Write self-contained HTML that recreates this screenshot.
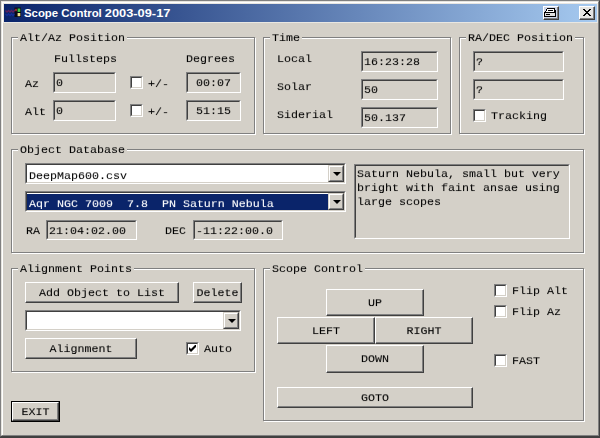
<!DOCTYPE html>
<html><head><meta charset="utf-8">
<style>
html,body{margin:0;padding:0;}
body{width:600px;height:438px;overflow:hidden;background:#404040;position:relative;font-family:"Liberation Mono",monospace;font-size:11.67px;line-height:14px;color:#000;}
*{box-sizing:border-box;}
.abs{position:absolute;}
#win{position:absolute;left:0;top:0;width:600px;height:437px;background:#d4d0c8;border-top:1px solid #808080;border-left:1px solid #808080;border-right:1px solid #404040;border-bottom:1px solid #404040;}
#win2{position:absolute;left:1px;top:1px;width:598px;height:435px;border-top:1px solid #e6e4de;border-left:1px solid #e6e4de;border-right:1px solid #808080;border-bottom:1px solid #808080;}
#win3{position:absolute;left:2px;top:2px;width:596px;height:433px;border-top:1px solid #fff;border-left:1px solid #fff;}
#title{outline:1px solid #e9e7e2;position:absolute;left:4px;top:4px;width:593px;height:18px;background:linear-gradient(to right,#0a246a 0%,#a6caf0 100%);}
.ttext{position:absolute;left:23px;top:6px;transform:scaleX(1.106);transform-origin:1px 0;font-family:"Liberation Sans",sans-serif;font-weight:bold;font-size:11px;line-height:14px;color:#fff;white-space:nowrap;}
.tbtn{position:absolute;top:6px;width:16px;height:14px;background:#d4d0c8;border-top:1px solid #fff;border-left:1px solid #fff;border-right:1px solid #404040;border-bottom:1px solid #404040;}
.tbtn:after{content:"";position:absolute;left:0;top:0;right:0;bottom:0;border-right:1px solid #808080;border-bottom:1px solid #808080;}
.grp{position:absolute;border:1px solid #808080;box-shadow:1px 1px 0 #fff, inset 1px 1px 0 #fff;}
.gl{position:absolute;background:#d4d0c8;white-space:pre;height:14px;line-height:14px;padding:0 2px;}
.t{position:absolute;white-space:pre;height:14px;line-height:14px;}
.in{position:absolute;background:#d4d0c8;border-top:1px solid #808080;border-left:1px solid #808080;border-right:1px solid #fff;border-bottom:1px solid #fff;}
.in:before{content:"";position:absolute;left:0;top:0;right:0;bottom:0;border-top:1px solid #404040;border-left:1px solid #404040;border-right:1px solid #d4d0c8;border-bottom:1px solid #d4d0c8;}
.in.w{background:#fff;}
.in span{position:absolute;white-space:pre;line-height:14px;height:14px;}
.t,.gl,.in span,.btn span{will-change:transform;transform:scaleY(0.96);transform-origin:0 11px;margin-top:1px;-webkit-text-stroke:0.08px;}
.cb{position:absolute;width:13px;height:13px;background:#fff;border-top:1px solid #808080;border-left:1px solid #808080;border-right:1px solid #fff;border-bottom:1px solid #fff;}
.cb:before{content:"";position:absolute;left:0;top:0;right:0;bottom:0;border-top:1px solid #404040;border-left:1px solid #404040;border-right:1px solid #d4d0c8;border-bottom:1px solid #d4d0c8;}
.btn{position:absolute;background:#d4d0c8;border-top:1px solid #fff;border-left:1px solid #fff;border-right:1px solid #404040;border-bottom:1px solid #404040;text-align:center;white-space:pre;}
.btn:before{content:"";position:absolute;left:0;top:0;right:0;bottom:0;border-right:1px solid #808080;border-bottom:1px solid #808080;}
.btn span{position:absolute;left:0;right:0;text-align:center;line-height:14px;height:14px;}
.dd{position:absolute;width:16px;background:#d4d0c8;border-top:1px solid #d4d0c8;border-left:1px solid #d4d0c8;border-right:1px solid #404040;border-bottom:1px solid #404040;}
.dd:before{content:"";position:absolute;left:0;top:0;right:0;bottom:0;border-top:1px solid #fff;border-left:1px solid #fff;border-right:1px solid #808080;border-bottom:1px solid #808080;}
.dd:after{content:"";position:absolute;left:4px;top:6px;border-left:4px solid transparent;border-right:4px solid transparent;border-top:4px solid #000;width:0;height:0;}
</style></head><body>
<div id="win"></div><div id="win2"></div><div id="win3"></div>
<div id="title"></div>
<svg class="abs" style="left:5px;top:7px" width="17" height="11" viewBox="0 0 17 11">
<rect x="9.5" y="0.5" width="6.5" height="9.5" fill="#0a0a14"/>
<rect x="12.6" y="1.5" width="2.7" height="3.4" fill="#38c848"/>
<rect x="12.6" y="6" width="2.7" height="3.2" fill="#f4e490"/>
<rect x="10" y="1.8" width="2" height="2.4" fill="#8c2830"/>
<path d="M0.5 3.5l1.5 1.5l1.5-1.5l1.5 1.5l1.5-1.5l1.5 1.5l2-2" stroke="#7c2058" stroke-width="1.3" stroke-opacity="0.75" fill="none"/>
<path d="M0.5 7l1.5 1.5l1.5-1.5l1.5 1.5l1.5-1.5l1.5 1.5l1.5-1.5" stroke="#1a34b8" stroke-width="1.3" stroke-opacity="0.6" fill="none"/>
</svg>
<div class="ttext" style="left:23.5px;transform:scaleX(1.035)">Scope Control</div><div class="ttext" style="left:104.5px;transform:scaleX(1.165)">2003-09-17</div>
<div class="tbtn" style="left:543px;background:#cdd6ea"></div>
<svg class="abs" style="left:544px;top:8px" width="12" height="9" viewBox="0 0 12 9" shape-rendering="crispEdges">
<path d="M3 0h8v1h-8zM2 1h1v2h-1zM10 1h1v3h-1zM4 2h5v1h-5zM1 3h1v1h-1zM11 2h1v2h-1zM0 4h12v1h-12zM0 5h1v3h-1zM11 5h1v3h-1zM0 8h12v1h-12zM2 6h4v1h-4z" fill="#000"/>
<path d="M3 1h7v1h-7zM3 2h1v1h-1zM9 2h1v1h-1zM2 3h8v1h-8z" fill="#fff"/>
<path d="M1 5h10v1h-10zM1 7h10v1h-10zM1 6h1v1h-1zM6 6h5v1h-5z" fill="#e0e0e0"/>
</svg>
<div class="tbtn" style="left:579px;background:#e4e4e2"></div>
<svg class="abs" style="left:583px;top:9px" width="8" height="7" viewBox="0 0 8 7" shape-rendering="crispEdges">
<path d="M0 0h2v1h-2zM6 0h2v1h-2zM1 1h2v1h-2zM5 1h2v1h-2zM2 2h4v1h-4zM3 3h2v1h-2zM2 4h4v1h-4zM1 5h2v1h-2zM5 5h2v1h-2zM0 6h2v1h-2zM6 6h2v1h-2z" fill="#000"/>
</svg>

<!-- Alt/Az Position -->
<div class="grp" style="left:11px;top:37px;width:244px;height:97px"></div>
<div class="gl" style="left:18px;top:30px">Alt/Az Position</div>
<div class="t" style="left:54px;top:51px">Fullsteps</div>
<div class="t" style="left:186px;top:51px">Degrees</div>
<div class="t" style="left:25px;top:76px">Az</div>
<div class="t" style="left:25px;top:104px">Alt</div>
<div class="in" style="left:53px;top:72px;width:63px;height:21px"><span style="left:2px;top:2px">0</span></div>
<div class="in" style="left:53px;top:100px;width:63px;height:21px"><span style="left:2px;top:2px">0</span></div>
<div class="cb" style="left:130px;top:76px"></div>
<div class="cb" style="left:130px;top:104px"></div>
<div class="t" style="left:148px;top:76px">+/-</div>
<div class="t" style="left:148px;top:104px">+/-</div>
<div class="in" style="left:186px;top:72px;width:55px;height:21px"><span style="left:0;right:0;top:2px;text-align:center">00:07</span></div>
<div class="in" style="left:186px;top:100px;width:55px;height:21px"><span style="left:0;right:0;top:2px;text-align:center">51:15</span></div>

<!-- Time -->
<div class="grp" style="left:263px;top:37px;width:188px;height:97px"></div>
<div class="gl" style="left:270px;top:30px">Time</div>
<div class="t" style="left:277px;top:51px">Local</div>
<div class="t" style="left:277px;top:79px">Solar</div>
<div class="t" style="left:277px;top:107px">Siderial</div>
<div class="in" style="left:361px;top:51px;width:77px;height:21px"><span style="left:2px;top:2px">16:23:28</span></div>
<div class="in" style="left:361px;top:79px;width:77px;height:21px"><span style="left:2px;top:2px">50</span></div>
<div class="in" style="left:361px;top:107px;width:77px;height:21px"><span style="left:2px;top:2px">50.137</span></div>

<!-- RA/DEC -->
<div class="grp" style="left:459px;top:37px;width:125px;height:97px"></div>
<div class="gl" style="left:466px;top:30px">RA/DEC Position</div>
<div class="in" style="left:473px;top:51px;width:91px;height:21px"><span style="left:2px;top:2px">?</span></div>
<div class="in" style="left:473px;top:79px;width:91px;height:21px"><span style="left:2px;top:2px">?</span></div>
<div class="cb" style="left:473px;top:109px"></div>
<div class="t" style="left:491px;top:108px">Tracking</div>

<!-- Object Database -->
<div class="grp" style="left:11px;top:149px;width:573px;height:104px"></div>
<div class="gl" style="left:18px;top:142px">Object Database</div>
<div class="in w" style="left:25px;top:163px;width:321px;height:21px"><span style="left:3px;top:4px">DeepMap600.csv</span></div>
<div class="dd" style="left:328px;top:165px;height:17px"></div>
<div class="in w" style="left:25px;top:191px;width:321px;height:21px"><div class="abs" style="left:1px;top:2px;width:301px;height:16px;background:#0a246a"></div><span style="left:3px;top:4px;color:#fff">Aqr NGC 7009  7.8  PN Saturn Nebula</span></div>
<div class="dd" style="left:328px;top:193px;height:17px"></div>
<div class="t" style="left:26px;top:223px">RA</div>
<div class="in" style="left:46px;top:220px;width:91px;height:20px"><span style="left:2px;top:2px">21:04:02.00</span></div>
<div class="t" style="left:165px;top:223px">DEC</div>
<div class="in" style="left:193px;top:220px;width:90px;height:20px"><span style="left:2px;top:2px">-11:22:00.0</span></div>
<div class="in" style="left:354px;top:164px;width:216px;height:75px"><span style="left:2px;top:1px">Saturn Nebula, small but very</span><span style="left:2px;top:15px">bright with faint ansae using</span><span style="left:2px;top:29px">large scopes</span></div>

<!-- Alignment Points -->
<div class="grp" style="left:11px;top:268px;width:244px;height:104px"></div>
<div class="gl" style="left:18px;top:261px">Alignment Points</div>
<div class="btn" style="left:25px;top:282px;width:154px;height:21px"><span style="top:2px">Add Object to List</span></div>
<div class="btn" style="left:193px;top:282px;width:49px;height:21px"><span style="top:2px">Delete</span></div>
<div class="in w" style="left:25px;top:310px;width:216px;height:21px"></div>
<div class="dd" style="left:223px;top:312px;height:17px"></div>
<div class="btn" style="left:25px;top:338px;width:112px;height:21px"><span style="top:2px">Alignment</span></div>
<div class="cb" style="left:186px;top:342px"></div>
<svg class="abs" style="left:189px;top:345px" width="7" height="7" viewBox="0 0 7 7"><path d="M0 2v3l2 2l5-5v-3l-5 5z" fill="#000"/></svg>
<div class="t" style="left:204px;top:341px">Auto</div>

<!-- Scope Control -->
<div class="grp" style="left:263px;top:268px;width:321px;height:153px"></div>
<div class="gl" style="left:270px;top:261px">Scope Control</div>
<div class="btn" style="left:326px;top:289px;width:98px;height:27px"><span style="top:5px">UP</span></div>
<div class="btn" style="left:277px;top:317px;width:98px;height:27px"><span style="top:5px">LEFT</span></div>
<div class="btn" style="left:375px;top:317px;width:98px;height:27px"><span style="top:5px">RIGHT</span></div>
<div class="btn" style="left:326px;top:345px;width:98px;height:28px"><span style="top:5px">DOWN</span></div>
<div class="btn" style="left:277px;top:387px;width:196px;height:21px"><span style="top:2px">GOTO</span></div>
<div class="cb" style="left:494px;top:284px"></div>
<div class="t" style="left:512px;top:283px">Flip Alt</div>
<div class="cb" style="left:494px;top:305px"></div>
<div class="t" style="left:512px;top:304px">Flip Az</div>
<div class="cb" style="left:494px;top:354px"></div>
<div class="t" style="left:512px;top:353px">FAST</div>

<!-- EXIT -->
<div class="abs" style="left:11px;top:401px;width:49px;height:21px;border:1px solid #000"></div>
<div class="btn" style="left:12px;top:402px;width:47px;height:19px"><span style="top:1px">EXIT</span></div>
</body></html>
